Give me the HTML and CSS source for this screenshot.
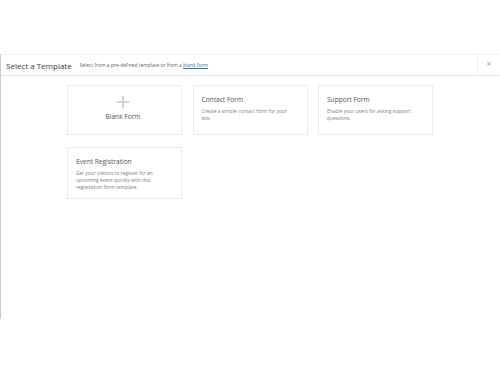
FILE: index.html
```html
<!DOCTYPE html>
<html>
<head>
<meta charset="UTF-8">
<title>Select a Template</title>
<link rel="stylesheet" href="styles.css">
</head>
<body>
  <div class="modal">
    <div class="modal-header">
      <h1>Select a Template</h1>
      <p class="hint">Select from a pre-defined template or from a <a href="#">blank form</a></p>
      <a class="close" href="#">&times;</a>
    </div>
    <div class="templates">
      <div class="card blank">
        <span class="plus"></span>
        <h2>Blank Form</h2>
      </div>
      <div class="card">
        <h2>Contact Form</h2>
        <p>Create a simple contact form for your site.</p>
      </div>
      <div class="card">
        <h2>Support Form</h2>
        <p>Enable your users for asking support questions.</p>
      </div>
      <div class="card">
        <h2>Event Registration</h2>
        <p>Get your visitors to register for an upcoming event quickly with this registration form template.</p>
      </div>
    </div>
  </div>
</body>
</html>
```
FILE: styles.css
```css
* {
  margin: 0;
  padding: 0;
  box-sizing: border-box;
}

body {
  font-family: "Open Sans", "Noto Sans", sans-serif;
  color: #555;
  background: #fff;
}

.modal {
  margin-top: 54px;
  height: 265px;
  border-left: 1px solid #ccc;
  border-top: 1px solid #f0f0f0;
}

.modal-header {
  display: flex;
  align-items: center;
  height: 21px;
  border-bottom: 1px solid #e6e6e6;
  padding-left: 5px;
}

.modal-header h1 {
  font-size: 8px;
  font-weight: normal;
  color: #3a3a3a;
}

.hint {
  font-size: 4.9px;
  color: #666;
  margin-left: 8px;
  flex: 1;
}

.hint a {
  color: #2a7ab0;
}

.close {
  width: 23px;
  height: 100%;
  border-left: 1px solid #eee;
  text-align: center;
  line-height: 19px;
  font-size: 7px;
  font-family: "DejaVu Sans", sans-serif;
  color: #999;
  text-decoration: none;
}

.templates {
  display: grid;
  grid-template-columns: repeat(3, 115px);
  column-gap: 10.5px;
  row-gap: 12px;
  width: 367px;
  margin: 9px 0 0 66px;
}

.card {
  height: 50px;
  border: 1px solid #ebebeb;
  padding: 9px 11px 9px 8px;
}

.card:nth-child(4) {
  height: 52px;
}

.card h2 {
  font-size: 6.6px;
  font-weight: normal;
  color: #555;
  margin-bottom: 4px;
}

.card p {
  font-size: 4.9px;
  line-height: 7px;
  color: #808080;
}

.blank {
  display: flex;
  flex-direction: column;
  align-items: center;
  padding-top: 10px;
}

.blank h2 {
  margin-top: 7px;
}

.plus {
  position: relative;
  width: 12px;
  height: 12px;
}

.plus::before,
.plus::after {
  content: "";
  position: absolute;
  background: #d2d2d2;
}

.plus::before {
  left: 5px;
  top: 0;
  width: 2px;
  height: 12px;
}

.plus::after {
  top: 5px;
  left: 0;
  width: 12px;
  height: 2px;
}
```
